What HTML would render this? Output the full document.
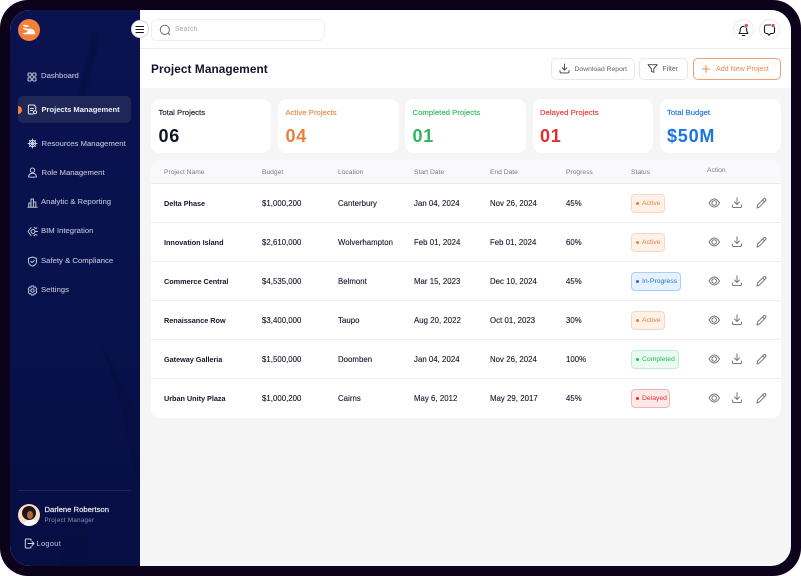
<!DOCTYPE html>
<html><head><meta charset="utf-8"><style>
*{box-sizing:border-box;margin:0;padding:0}
html,body{width:801px;height:576px;overflow:hidden;background:#fff;font-family:"Liberation Sans",sans-serif}
.a{position:absolute;white-space:nowrap}
#frame{position:absolute;left:0;top:0;width:801px;height:576px;background:#0c0219;border-radius:28px}
#screen{position:absolute;left:10px;top:10px;width:781px;height:556px;background:#f5f5f6;border-radius:20px;overflow:hidden}
#side{position:absolute;left:0;top:0;width:130px;height:556px;background:linear-gradient(180deg,#0a1350 0%,#07114b 60%,#070e44 100%)}
.nav{position:absolute;left:31px;font-size:7.7px;letter-spacing:.02px;color:#b9bdd3;white-space:nowrap;line-height:10px;-webkit-text-stroke:.12px #b9bdd3}
.ic{position:absolute;fill:none;stroke:#c4c8da;stroke-width:1;stroke-linecap:round;stroke-linejoin:round}
.card{position:absolute;top:89px;height:54px;background:#fff;border-radius:9px}
.card .l{position:absolute;left:7.5px;top:8.5px;font-size:7.7px;letter-spacing:.03px;white-space:nowrap;line-height:10px;-webkit-text-stroke:.15px currentColor}
.card .v{position:absolute;left:7.5px;top:26px;font-size:18px;font-weight:bold;letter-spacing:.8px;line-height:22px;white-space:nowrap}
#tbl{position:absolute;left:141px;top:150px;width:630px;height:258px;background:#fff;border-radius:9px;overflow:hidden}
#th{position:absolute;left:0;top:0;width:630px;height:24px;background:#f9f9fb;border-bottom:1px solid #e9eaee}
.h{position:absolute;font-size:6.7px;letter-spacing:0;color:#777b88;white-space:nowrap;top:7.5px;line-height:9px}
.sep{position:absolute;left:0;width:630px;height:1px;background:#eeeff2}
.c{position:absolute;font-size:7.8px;letter-spacing:.04px;color:#14162b;white-space:nowrap;line-height:10px;-webkit-text-stroke:.12px #14162b}
.c.b{font-size:7.3px;font-weight:bold;letter-spacing:-.03px;-webkit-text-stroke:0}
.tag{position:absolute;left:480px;height:19px;border-radius:4px;font-size:6.8px;letter-spacing:0;line-height:17px;padding-left:10px;white-space:nowrap;border:1px solid}
.tag:before{content:"";position:absolute;left:3.5px;top:6.5px;width:3.4px;height:3.4px;border-radius:50%;background:currentColor}
.act{color:#e8813f;background:#fdf1e8;border-color:#f6d8c2;width:34px}
.pro{color:#1d72d8;background:#e6f2fe;border-color:#a9cff5;width:50px}
.com{color:#2db45d;background:#e9fbf0;border-color:#bdeed0;width:48px}
.del{color:#dc3232;background:#fde8e8;border-color:#f2b5b5;width:39px}
.ai{position:absolute;left:556px;fill:none;stroke:#77797f;stroke-width:1;stroke-linecap:round;stroke-linejoin:round}
.btn{position:absolute;top:47.5px;height:22px;background:#fff;border:1px solid #e6e7eb;border-radius:5px;font-size:6.8px;letter-spacing:0;color:#5f6270;line-height:21px;white-space:nowrap}
</style></head><body>
<svg width="0" height="0" style="position:absolute"><defs>
<symbol id="acts" viewBox="0 0 100 14"><path d="M2 7C3.800 4.100 5.800 3 7.200 3S10.800 4.100 12.500 7C10.800 9.900 8.800 11 7.200 11S3.800 9.900 2 7Z"/><circle cx="7.200" cy="7" r="2.300"/><path d="M30 1.800v6.700M27.500 6l2.500 2.500L32.500 6M25.500 9v1.200c0 .8.500 1.300 1.300 1.300h6.400c.8 0 1.300-.5 1.300-1.300V9"/><path d="M50 12l.6-3 6-6c.6-.6 1.400-.6 1.900 0s.5 1.300 0 1.800l-6 6.100ZM55.600 4l1.900 1.900"/></symbol>
</defs></svg>
<div id="frame"></div>
<div id="screen">
<div style="position:absolute;left:130px;top:0;width:651px;height:39px;background:#fff;border-bottom:1px solid #eeeff1"></div>
<div style="position:absolute;left:130px;top:39px;width:651px;height:39px;background:#fff"></div>

<div id="side">
<svg style="position:absolute;left:0;top:0" width="130" height="556"><path d="M90 22 C86 50 78 80 66 110 L58 110 C70 80 78 50 82 22Z" fill="#040b36" opacity=".35"/><path d="M90 330 L130 410 L130 480 C118 430 108 380 90 330Z" fill="#040b36" opacity=".28"/><path d="M55 500 C75 510 80 530 78 556 L50 556Z" fill="#040b36" opacity=".2"/></svg>
<div style="position:absolute;left:8px;top:9px;width:22px;height:22px;border-radius:50%;background:#f4803a"></div>
<svg style="position:absolute;left:8px;top:9px" width="22" height="22" fill="none" stroke="#fff" stroke-linecap="round" stroke-linejoin="round"><path d="M6 6.500l4 .8M6 9.500l5 1.500M6 14.500h10.500" stroke-width="1.600"/><path d="M9 13.500l3-3.500 3.500 1.500 1 2.500Z" stroke-width="1.100" fill="#fff"/></svg>

<svg class="ic" style="left:17px;top:61.500px" width="10" height="10"><rect x="1" y="1" width="3.300" height="3.300" rx="1"/><rect x="5.700" y="1" width="3.300" height="3.300" rx="1"/><rect x="1" y="5.700" width="3.300" height="3.300" rx="1"/><rect x="5.700" y="5.700" width="3.300" height="3.300" rx="1"/></svg>
<div class="nav" style="top:61px">Dashboard</div>

<div style="position:absolute;left:8px;top:86px;width:113px;height:27px;background:#1e2756;border-radius:5px"></div>
<div style="position:absolute;left:8px;top:95.500px;width:4px;height:8px;background:#f4803a;border-radius:0 4px 4px 0"></div>
<svg class="ic" style="left:17px;top:94px;stroke:#e8eaf3" width="11" height="11"><path d="M7 1H2.200a.8.8 0 0 0-.8.8v7.400a.8.8 0 0 0 .8.8H6M7 1l1.800 2V5.500M3.500 4.500h3M3.500 6.500h2"/><circle cx="8" cy="8.200" r="1.600"/></svg>
<div class="nav" style="top:94.500px;left:31.500px;color:#eceef6;font-size:7.600px;font-weight:bold;letter-spacing:-.02px;-webkit-text-stroke:0">Projects Management</div>

<svg class="ic" style="left:17px;top:128px" width="11" height="11"><circle cx="5.500" cy="5.500" r="3.200"/><path d="M5.500 1v9M1 5.500h9M2.500 2.500l6 6M8.500 2.500l-6 6"/></svg>
<div class="nav" style="top:128.500px;left:31.500px">Resources Management</div>

<svg class="ic" style="left:17px;top:157px" width="11" height="11"><circle cx="5.500" cy="3.200" r="2.200"/><path d="M1.500 10c0-5 8-5 8 0 0 .3-8 .3-8 0Z"/></svg>
<div class="nav" style="top:158px;left:31.500px">Role Management</div>

<svg class="ic" style="left:17px;top:186.500px" width="11" height="11"><path d="M.8 10.200h9.400M1.800 10V6h2v4M4 10V2h2.400v8M6.400 10V5h2.400v5"/></svg>
<div class="nav" style="top:187px">Analytic &amp; Reporting</div>

<svg class="ic" style="left:17px;top:216px" width="11" height="11"><circle cx="6" cy="5.500" r="2"/><path d="M4 1.500 1 5.500l3 4M7 1.200l1.500 1.300L10 2M8.500 5.500H10.500M7 9.800l1.500-1.300L10 9"/></svg>
<div class="nav" style="top:216px">BIM Integration</div>

<svg class="ic" style="left:17px;top:245.500px" width="11" height="11"><path d="M5.500 1 9.500 2.400v3c0 2.400-1.700 4-4 4.800-2.300-.8-4-2.400-4-4.800v-3Z"/><path d="M3.800 5.400l1.300 1.300 2.200-2.200"/></svg>
<div class="nav" style="top:245.500px">Safety &amp; Compliance</div>

<svg class="ic" style="left:17px;top:274.500px" width="11" height="11"><circle cx="5.500" cy="5.500" r="1.700"/><path d="M4.300 1h2.400l.4 1.300 1.300-.3L9.800 4l-.9 1.500.9 1.500-1.400 2-1.300-.3L6.700 10H4.300l-.4-1.300-1.300.3-1.400-2 .9-1.500-.9-1.500L2.600 2l1.300.3Z"/></svg>
<div class="nav" style="top:275px">Settings</div>

<div style="position:absolute;left:8px;top:480px;width:113px;height:1px;background:#1b2459"></div>
<div style="position:absolute;left:8px;top:494px;width:22px;height:22px;border-radius:50%;background:#f7dfc8;overflow:hidden"><div style="position:absolute;left:4px;top:2px;width:14px;height:14px;border-radius:50%;background:#241512"></div><div style="position:absolute;left:9px;top:7px;width:6px;height:8px;border-radius:50%;background:#a8694a"></div><div style="position:absolute;left:6px;top:16px;width:15px;height:8px;border-radius:50%;background:#fff"></div></div>
<div class="a" style="left:34.500px;top:493.500px;font-size:7.700px;color:#f2f3f8;line-height:11px;-webkit-text-stroke:.15px #f2f3f8">Darlene Robertson</div>
<div class="a" style="left:34.500px;top:505.500px;font-size:6.200px;letter-spacing:.3px;color:#8f94b0;line-height:10px">Project Manager</div>
<svg class="ic" style="left:14px;top:528px;stroke:#d3d6e4" width="11" height="11"><path d="M7 2.500V1.700A.7.7 0 0 0 6.300 1H2a.7.7 0 0 0-.7.7v7.600a.7.7 0 0 0 .7.7h4.300a.7.7 0 0 0 .7-.7V8.500M4 5.500h6M8 3.500l2 2-2 2"/></svg>
<div class="a" style="left:26.500px;top:529px;font-size:7.400px;letter-spacing:.33px;color:#c4c8da;line-height:10px">Logout</div>
</div>

<div style="position:absolute;left:121px;top:10px;width:18px;height:18px;background:#fff;border:1px solid #d9dae0;border-radius:50%"></div>
<svg style="position:absolute;left:125px;top:14.500px" width="10" height="9" stroke="#15172c" stroke-width="1.100" stroke-linecap="round"><path d="M1 1.500h7.500M1 4.500h7.500M1 7.500h7.500"/></svg>

<div style="position:absolute;left:141px;top:8.500px;width:174px;height:22px;background:#fff;border:1px solid #eeeff2;border-radius:6px"></div>
<svg style="position:absolute;left:149px;top:13.500px" width="12" height="12" fill="none" stroke="#5a5d6c" stroke-width=".9" stroke-linecap="round"><circle cx="5.800" cy="5.800" r="4.600"/><path d="M9.400 9.400l1.400 1.400"/></svg>
<div class="a" style="left:165px;top:15px;font-size:6.900px;letter-spacing:.1px;color:#a5a7b2;line-height:10px">Search</div>

<div style="position:absolute;left:723px;top:9px;width:21px;height:21px;background:#fff;border:1px solid #eaebef;border-radius:50%"></div>
<svg style="position:absolute;left:723px;top:9px" width="21" height="21" fill="none" stroke="#15172c" stroke-width="1.100" stroke-linecap="round" stroke-linejoin="round"><path d="M6 14.500h9c-1-1-1.300-2-1.300-4a3.200 3.200 0 0 0-6.400 0c0 2-.3 3-1.300 4ZM9.200 16.500h2.600"/><circle cx="13.300" cy="6.500" r="1.900" fill="#ef4a4a" stroke="#fff" stroke-width=".5"/></svg>
<div style="position:absolute;left:749px;top:9px;width:21px;height:21px;background:#fff;border:1px solid #eaebef;border-radius:50%"></div>
<svg style="position:absolute;left:749px;top:9px" width="21" height="21" fill="none" stroke="#15172c" stroke-width="1.100" stroke-linecap="round" stroke-linejoin="round"><path d="M7.500 6h6a2 2 0 0 1 2 2v4.500a2 2 0 0 1-2 2h-2l-1.500 1.700-1.500-1.700h-1a2 2 0 0 1-2-2V8a2 2 0 0 1 2-2Z"/><circle cx="14" cy="6.500" r="1.900" fill="#ef4a4a" stroke="#fff" stroke-width=".5"/></svg>

<div class="a" style="left:141px;top:51.500px;font-size:11.800px;font-weight:bold;letter-spacing:.08px;color:#11132a;line-height:15px">Project Management</div>

<div class="btn" style="left:541px;width:84px;padding-left:22.500px">Download Report</div>
<svg style="position:absolute;left:549px;top:53px;fill:none;stroke:#383b4a;stroke-width:.9;stroke-linecap:round;stroke-linejoin:round" width="11" height="11"><path d="M5.500 1v6M3.200 4.800l2.300 2.300 2.300-2.300M1 7.500v1.200c0 .7.500 1.200 1.200 1.200h6.600c.7 0 1.200-.5 1.200-1.200V7.500"/></svg>
<div class="btn" style="left:629px;width:49px;padding-left:22.500px;font-size:7px">Filter</div>
<svg style="position:absolute;left:637px;top:53px;fill:none;stroke:#383b4a;stroke-width:.9;stroke-linecap:round;stroke-linejoin:round" width="11" height="11"><path d="M1 1.700h9.200L6.800 5.800v3.500L4.400 8.500v-2.700Z"/></svg>
<div class="btn" style="left:682.500px;width:88.500px;border-color:#f0a273;color:#ea8a4e;padding-left:22.500px;font-size:7.100px">Add New Project</div>
<svg style="position:absolute;left:691px;top:53.500px;stroke:#ea8a4e;stroke-width:1;stroke-linecap:round" width="10" height="10"><path d="M5 1.500v7M1.500 5h7"/></svg>

<div class="card" style="left:141px;width:120px"><div class="l" style="color:#15172c">Total Projects</div><div class="v" style="color:#11132a">06</div></div>
<div class="card" style="left:268px;width:121px"><div class="l" style="color:#ea8a4e">Active Projects</div><div class="v" style="color:#e8803d">04</div></div>
<div class="card" style="left:395px;width:121px"><div class="l" style="color:#32b862">Completed Projects</div><div class="v" style="color:#2eb65b">01</div></div>
<div class="card" style="left:523px;width:120px"><div class="l" style="left:7px;color:#e13a3a">Delayed Projects</div><div class="v" style="left:7px;color:#df3030">01</div></div>
<div class="card" style="left:650px;width:121px"><div class="l" style="left:7px;color:#1b74dc">Total Budget</div><div class="v" style="left:7px;color:#1a75e0">$50M</div></div>

<div id="tbl">
<div id="th"></div>
<div class="h" style="left:13px">Project Name</div><div class="h" style="left:111px">Budget</div><div class="h" style="left:187px">Location</div><div class="h" style="left:263px">Start Date</div><div class="h" style="left:339px">End Date</div><div class="h" style="left:415px">Progress</div><div class="h" style="left:480px">Status</div><div class="h" style="left:556px;top:6px">Action</div>

<div class="sep" style="top:62px"></div><div class="sep" style="top:101px"></div><div class="sep" style="top:140px"></div><div class="sep" style="top:179px"></div><div class="sep" style="top:218px"></div>

<div class="c b" style="left:13px;top:38.500px">Delta Phase</div><div class="c" style="left:111px;top:38.500px">$1,000,200</div><div class="c" style="left:187px;top:38.500px">Canterbury</div><div class="c" style="left:263px;top:38.500px">Jan 04, 2024</div><div class="c" style="left:339px;top:38.500px">Nov 26, 2024</div><div class="c" style="left:415px;top:38.500px">45%</div><div class="tag act" style="top:34px">Active</div>

<div class="c b" style="left:13px;top:77.500px">Innovation Island</div><div class="c" style="left:111px;top:77.500px">$2,610,000</div><div class="c" style="left:187px;top:77.500px">Wolverhampton</div><div class="c" style="left:263px;top:77.500px">Feb 01, 2024</div><div class="c" style="left:339px;top:77.500px">Feb 01, 2024</div><div class="c" style="left:415px;top:77.500px">60%</div><div class="tag act" style="top:73px">Active</div>

<div class="c b" style="left:13px;top:116.500px">Commerce Central</div><div class="c" style="left:111px;top:116.500px">$4,535,000</div><div class="c" style="left:187px;top:116.500px">Belmont</div><div class="c" style="left:263px;top:116.500px">Mar 15, 2023</div><div class="c" style="left:339px;top:116.500px">Dec 10, 2024</div><div class="c" style="left:415px;top:116.500px">45%</div><div class="tag pro" style="top:112px">In-Progress</div>

<div class="c b" style="left:13px;top:155.500px">Renaissance Row</div><div class="c" style="left:111px;top:155.500px">$3,400,000</div><div class="c" style="left:187px;top:155.500px">Taupo</div><div class="c" style="left:263px;top:155.500px">Aug 20, 2022</div><div class="c" style="left:339px;top:155.500px">Oct 01, 2023</div><div class="c" style="left:415px;top:155.500px">30%</div><div class="tag act" style="top:151px">Active</div>

<div class="c b" style="left:13px;top:194.500px">Gateway Galleria</div><div class="c" style="left:111px;top:194.500px">$1,500,000</div><div class="c" style="left:187px;top:194.500px">Doomben</div><div class="c" style="left:263px;top:194.500px">Jan 04, 2024</div><div class="c" style="left:339px;top:194.500px">Nov 26, 2024</div><div class="c" style="left:415px;top:194.500px">100%</div><div class="tag com" style="top:190px">Completed</div>

<div class="c b" style="left:13px;top:233.500px">Urban Unity Plaza</div><div class="c" style="left:111px;top:233.500px">$1,000,200</div><div class="c" style="left:187px;top:233.500px">Cairns</div><div class="c" style="left:263px;top:233.500px">May 6, 2012</div><div class="c" style="left:339px;top:233.500px">May 29, 2017</div><div class="c" style="left:415px;top:233.500px">45%</div><div class="tag del" style="top:229px">Delayed</div>

<svg class="ai" style="top:36px" width="100" height="14"><use href="#acts"/></svg>
<svg class="ai" style="top:75px" width="100" height="14"><use href="#acts"/></svg>
<svg class="ai" style="top:114px" width="100" height="14"><use href="#acts"/></svg>
<svg class="ai" style="top:153px" width="100" height="14"><use href="#acts"/></svg>
<svg class="ai" style="top:192px" width="100" height="14"><use href="#acts"/></svg>
<svg class="ai" style="top:231px" width="100" height="14"><use href="#acts"/></svg>
</div>
</div>
</body></html>
